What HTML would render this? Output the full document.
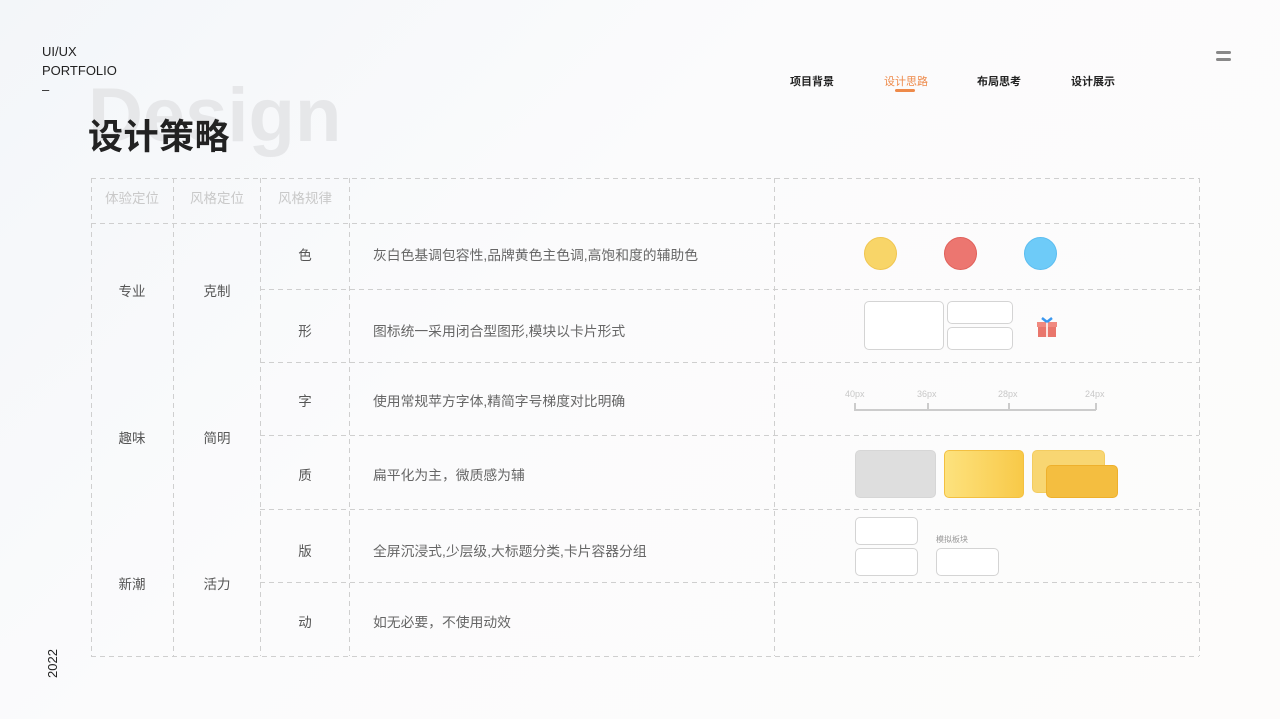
<!DOCTYPE html>
<html><head><meta charset="utf-8">
<style>
*{margin:0;padding:0;box-sizing:border-box}
body{width:1280px;height:719px;overflow:hidden;position:relative;
background:linear-gradient(135deg,#f3f6f9 0%,#fbfbfc 40%,#fdfcfb 100%);
font-family:"Liberation Sans","Noto Sans CJK SC",sans-serif;color:#222}
.a{position:absolute}
.hl{position:absolute;height:1px;background:repeating-linear-gradient(90deg,#cfcfcf 0 5px,transparent 5px 9px)}
.vl{position:absolute;width:1px;background:repeating-linear-gradient(180deg,#cfcfcf 0 5px,transparent 5px 9px)}
.c{position:absolute;font-size:13.5px;color:#555;text-align:center;transform:translate(-50%,-50%);white-space:nowrap}
.t{position:absolute;font-size:13.8px;color:#666;transform:translateY(-50%);white-space:nowrap}
.h{color:#c9c9c9}
.nav{position:absolute;top:73px;font-size:11px;font-weight:bold;color:#222}
.box{position:absolute;border:1.5px solid #d4d4d4;border-radius:5px;background:#fff}
</style></head><body>
<div class="a" style="left:42px;top:42px;font-size:13px;line-height:19px;color:#222">UI/UX<br>PORTFOLIO<br>–</div>
<div class="a" style="left:88px;top:72px;font-size:76px;font-weight:bold;color:#e6e7e9">Design</div>
<div class="a" style="left:88px;top:109px;font-size:35px;font-weight:bold;color:#222;letter-spacing:0.5px">设计策略</div>
<div class="nav" style="left:790px">项目背景</div>
<div class="nav" style="left:884px;color:#ee8a4a;font-weight:normal">设计思路</div>
<div class="a" style="left:895px;top:89px;width:20px;height:3px;border-radius:2px;background:#ee8a4a"></div>
<div class="nav" style="left:977px">布局思考</div>
<div class="nav" style="left:1071px">设计展示</div>
<div class="a" style="left:1216px;top:51px;width:15px;height:3px;border-radius:2px;background:#888"></div>
<div class="a" style="left:1216px;top:58px;width:15px;height:3px;border-radius:2px;background:#888"></div>
<div class="a" style="left:45px;top:678px;font-size:13px;transform:rotate(-90deg);transform-origin:0 0;color:#222">2022</div>

<div class="hl" style="left:91px;width:1108px;top:178px"></div>
<div class="hl" style="left:91px;width:1108px;top:223px"></div>
<div class="hl" style="left:260px;width:939px;top:289px"></div>
<div class="hl" style="left:260px;width:939px;top:362px"></div>
<div class="hl" style="left:260px;width:939px;top:435px"></div>
<div class="hl" style="left:260px;width:939px;top:509px"></div>
<div class="hl" style="left:260px;width:939px;top:582px"></div>
<div class="hl" style="left:91px;width:1108px;top:656px"></div>
<div class="vl" style="left:91px;top:178px;height:478px"></div>
<div class="vl" style="left:173px;top:178px;height:478px"></div>
<div class="vl" style="left:260px;top:178px;height:478px"></div>
<div class="vl" style="left:349px;top:178px;height:478px"></div>
<div class="vl" style="left:774px;top:178px;height:478px"></div>
<div class="vl" style="left:1199px;top:178px;height:478px"></div>

<div class="c h" style="left:132px;top:197px">体验定位</div>
<div class="c h" style="left:217px;top:197px">风格定位</div>
<div class="c h" style="left:305px;top:197px">风格规律</div>
<div class="c" style="left:132px;top:290px">专业</div>
<div class="c" style="left:217px;top:290px">克制</div>
<div class="c" style="left:132px;top:437px">趣味</div>
<div class="c" style="left:217px;top:437px">简明</div>
<div class="c" style="left:132px;top:583px">新潮</div>
<div class="c" style="left:217px;top:583px">活力</div>
<div class="c" style="left:305px;top:254px">色</div>
<div class="c" style="left:305px;top:330px">形</div>
<div class="c" style="left:305px;top:400px">字</div>
<div class="c" style="left:305px;top:474px">质</div>
<div class="c" style="left:305px;top:550px">版</div>
<div class="c" style="left:305px;top:621px">动</div>
<div class="t" style="left:373px;top:254px">灰白色基调包容性,品牌黄色主色调,高饱和度的辅助色</div>
<div class="t" style="left:373px;top:330px">图标统一采用闭合型图形,模块以卡片形式</div>
<div class="t" style="left:373px;top:400px">使用常规苹方字体,精简字号梯度对比明确</div>
<div class="t" style="left:373px;top:474px">扁平化为主，微质感为辅</div>
<div class="t" style="left:373px;top:550px">全屏沉浸式,少层级,大标题分类,卡片容器分组</div>
<div class="t" style="left:373px;top:621px">如无必要，不使用动效</div>

<div class="a" style="left:864px;top:237px;width:33px;height:33px;border-radius:50%;background:#f8d568;border:1px solid #f0c550"></div>
<div class="a" style="left:944px;top:237px;width:33px;height:33px;border-radius:50%;background:#ec7670;border:1px solid #e0605a"></div>
<div class="a" style="left:1024px;top:237px;width:33px;height:33px;border-radius:50%;background:#6ecbf8;border:1px solid #5bbdf0"></div>
<div class="box" style="left:864px;top:301px;width:80px;height:49px"></div>
<div class="box" style="left:947px;top:301px;width:66px;height:23px"></div>
<div class="box" style="left:947px;top:327px;width:66px;height:23px"></div>
<svg class="a" style="left:1035px;top:315px" width="24" height="24" viewBox="0 0 24 24">
<rect x="2" y="7" width="20" height="5" fill="#f08a80"/>
<rect x="3" y="12" width="18" height="10" fill="#e9766c"/>
<rect x="11" y="7" width="2" height="15" fill="#fbe3df"/>
<path d="M12 7 L7 3 M12 7 L17 3" stroke="#3a98f0" stroke-width="2.5" fill="none"/>
</svg>
<div class="a" style="left:845px;top:389px;font-size:9px;color:#c8c8c8">40px</div>
<div class="a" style="left:917px;top:389px;font-size:9px;color:#c8c8c8">36px</div>
<div class="a" style="left:998px;top:389px;font-size:9px;color:#c8c8c8">28px</div>
<div class="a" style="left:1085px;top:389px;font-size:9px;color:#c8c8c8">24px</div>
<div class="a" style="left:854px;top:409px;width:242px;height:1.5px;background:#ccc"></div>
<div class="a" style="left:854px;top:403px;width:1.5px;height:7px;background:#ccc"></div>
<div class="a" style="left:927px;top:403px;width:1.5px;height:7px;background:#ccc"></div>
<div class="a" style="left:1008px;top:403px;width:1.5px;height:7px;background:#ccc"></div>
<div class="a" style="left:1095px;top:403px;width:1.5px;height:7px;background:#ccc"></div>
<div class="a" style="left:855px;top:450px;width:81px;height:48px;border-radius:5px;background:#dedede;border:1px solid #d6d6d6"></div>
<div class="a" style="left:944px;top:450px;width:80px;height:48px;border-radius:5px;background:linear-gradient(90deg,#fde27e,#f8c948);border:1px solid #f3c041"></div>
<div class="a" style="left:1032px;top:450px;width:73px;height:43px;border-radius:5px;background:#f8d672;border:1px solid #f3cc60"></div>
<div class="a" style="left:1046px;top:465px;width:72px;height:33px;border-radius:5px;background:#f4be40;border:1px solid #eeb02c"></div>
<div class="box" style="left:855px;top:517px;width:63px;height:28px"></div>
<div class="box" style="left:855px;top:548px;width:63px;height:28px"></div>
<div class="a" style="left:936px;top:534px;font-size:8px;color:#999">模拟板块</div>
<div class="box" style="left:936px;top:548px;width:63px;height:28px"></div>
</body></html>
